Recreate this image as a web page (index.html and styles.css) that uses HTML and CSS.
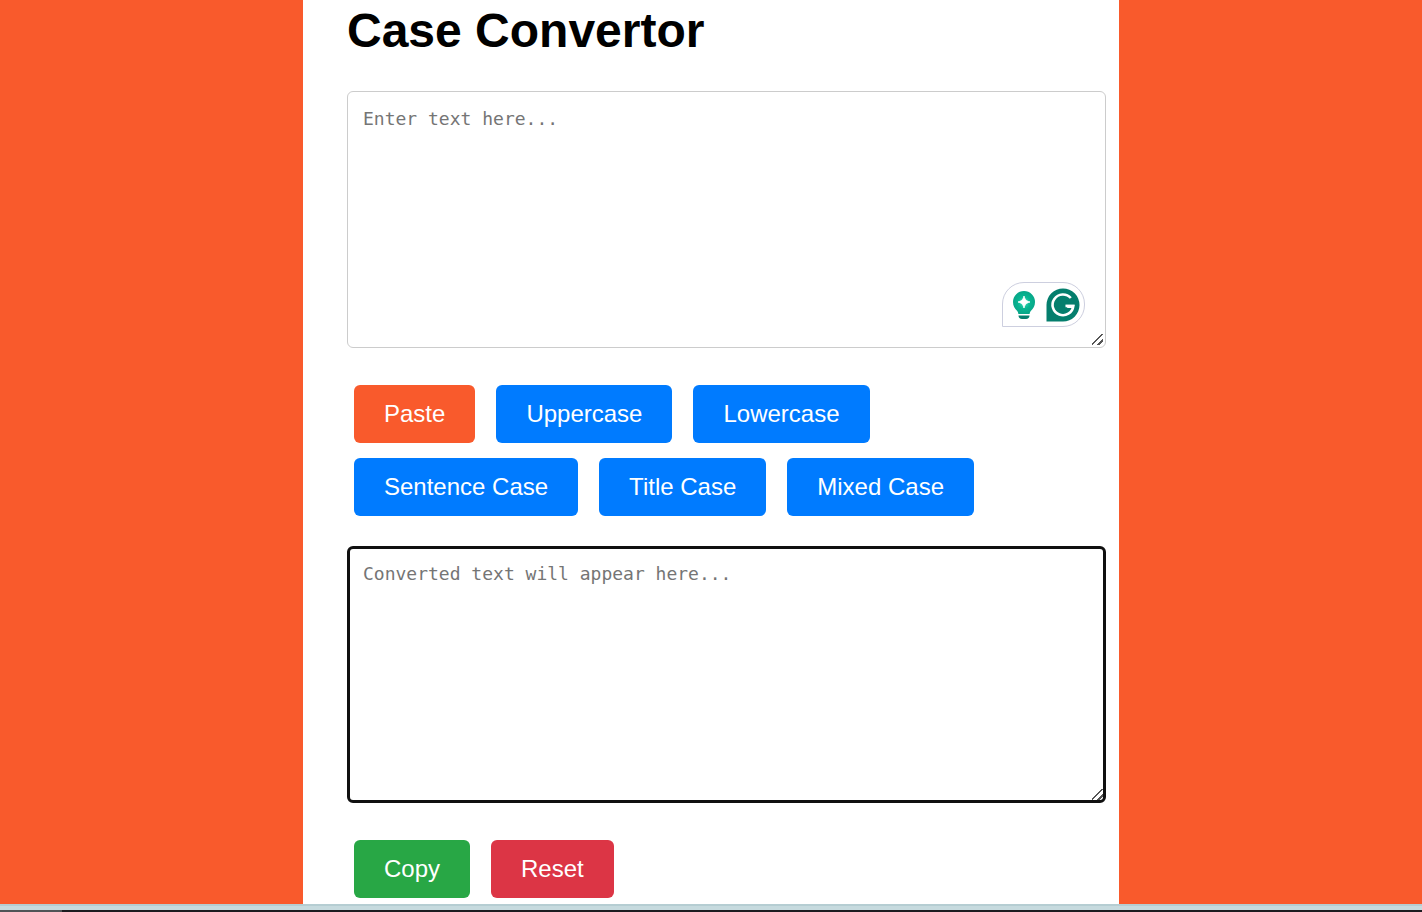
FILE: index.html
```html
<!DOCTYPE html>
<html lang="en">
<head>
  <meta charset="utf-8">
  <meta name="viewport" content="width=device-width, initial-scale=1">
  <title>Case Convertor</title>
  <link rel="stylesheet" href="styles.css">
</head>
<body class="page">
  <main class="container">
    <h1 class="title">Case Convertor</h1>

    <div class="field">
      <textarea class="text-box" aria-label="Text to convert" placeholder="Enter text here..."></textarea>
      <div class="assistant">
        <button class="assistant-button" type="button" aria-label="Writing ideas">
          <svg class="bulb" viewBox="0 0 24 30" aria-hidden="true">
            <defs>
              <radialGradient id="glow" cx="50%" cy="50%" r="55%">
                <stop offset="0" stop-color="#3fe0bd"/>
                <stop offset="0.5" stop-color="#08b591"/>
                <stop offset="1" stop-color="#06a386"/>
              </radialGradient>
            </defs>
            <path fill="url(#glow)" d="M12 1A11 11 0 0 0 1 12c0 3.800 1.700 6.600 4 8.700.900.900 1.200 2.100 1.400 3.300h11.200c.200-1.200.500-2.400 1.400-3.300 2.300-2.100 4-4.900 4-8.700A11 11 0 0 0 12 1z"/>
            <path fill="#fff" stroke="#fff" stroke-width="0.8" stroke-linejoin="round" d="M12 6c1.300 4 2 4.700 6 6-4 1.300-4.700 2-6 6-1.300-4-2-4.700-6-6 4-1.300 4.700-2 6-6z"/>
            <path fill="#047e6d" d="M6.500 25.500h11c0 2.300-1.300 3.500-3.500 3.500h-4c-2.200 0-3.500-1.200-3.500-3.500z"/>
          </svg>
        </button>
        <button class="assistant-button" type="button" aria-label="Check grammar">
          <svg class="mark" viewBox="0 0 34 34" aria-hidden="true">
            <path fill="#047e6d" d="M17 0.500A16.500 16.500 0 1 1 17 33.500H0.500V17A16.500 16.500 0 0 1 17 0.500z"/>
            <path fill="none" stroke="#fff" stroke-width="2.600" d="M24.800 10A10.400 10.400 0 1 0 27.300 18H19.500"/>
            <path fill="#fff" d="M19.500 16.700h9.100l-1.300 3.200h-5.800z"/>
          </svg>
        </button>
      </div>
    </div>

    <div class="buttons">
      <button class="button paste" type="button">Paste</button>
      <button class="button" type="button">Uppercase</button>
      <button class="button" type="button">Lowercase</button>
      <button class="button" type="button">Sentence Case</button>
      <button class="button" type="button">Title Case</button>
      <button class="button" type="button">Mixed Case</button>
    </div>

    <textarea class="text-box active" aria-label="Converted text" placeholder="Converted text will appear here..."></textarea>

    <div class="buttons actions">
      <button class="button copy" type="button">Copy</button>
      <button class="button reset" type="button">Reset</button>
    </div>
  </main>
  <footer class="bottom-bar"></footer>
</body>
</html>
```
FILE: styles.css
```css
* {
  box-sizing: border-box;
}

.page {
  margin: 0;
  min-height: 100vh;
  display: flex;
  flex-direction: column;
  background: #f95a2c;
  font-family: "Liberation Sans", Arial, sans-serif;
}

.container {
  flex: 1;
  width: 100%;
  max-width: 816px;
  margin: 0 auto;
  padding: 3px 13px 6px 44px;
  background: #fff;
}

.title {
  margin: 0 0 32px;
  font-size: 48px;
  line-height: 56px;
  color: #000;
}

.field {
  position: relative;
}

.text-box {
  display: block;
  width: 100%;
  height: 257px;
  padding: 15px;
  border: 1px solid #ccc;
  border-radius: 6px;
  outline: none;
  background: #fff;
  font-family: "DejaVu Sans Mono", monospace;
  font-size: 18px;
  line-height: 24px;
  resize: both;
}

.text-box::placeholder {
  color: #757575;
}

.text-box.active {
  padding: 13px;
  border: 3px solid #101010;
}

.text-box::-webkit-resizer {
  background: linear-gradient(135deg, transparent 44%, #555 44%, #555 54%, transparent 54%, transparent 72%, #555 72%, #555 82%, transparent 82%) no-repeat 2px 2px / 11px 11px;
}

.text-box.active::-webkit-resizer {
  background-position: 4px 4px;
}

.assistant {
  position: absolute;
  right: 21px;
  bottom: 21px;
  display: flex;
  align-items: center;
  justify-content: space-between;
  width: 83px;
  height: 45px;
  padding: 0 4px 0 9px;
  border: 1px solid #cdcfdf;
  border-radius: 22px 22px 22px 0;
  background: #fff;
}

.assistant-button {
  display: flex;
  padding: 0;
  border: 0;
  background: none;
}

.bulb {
  width: 24px;
  height: 30px;
}

.mark {
  width: 34px;
  height: 34px;
}

.buttons {
  display: flex;
  flex-wrap: wrap;
  gap: 15px 21px;
  padding: 37px 100px 30px 7px;
}

.button {
  height: 58px;
  padding: 0 30px;
  border: 0;
  border-radius: 6px;
  background: #007bff;
  color: #fff;
  font-family: inherit;
  font-size: 24px;
  line-height: 28px;
}

.paste {
  background: #f95a2c;
}

.actions {
  padding-bottom: 0;
}

.copy {
  background: #28a745;
}

.reset {
  background: #dc3545;
}

.bottom-bar {
  height: 8px;
  border-top: 2px solid #b5cdd2;
  background: linear-gradient(90deg, #505457 62px, #1c1d21 62px) no-repeat bottom / 100% 2px, #c6dade;
}
```
